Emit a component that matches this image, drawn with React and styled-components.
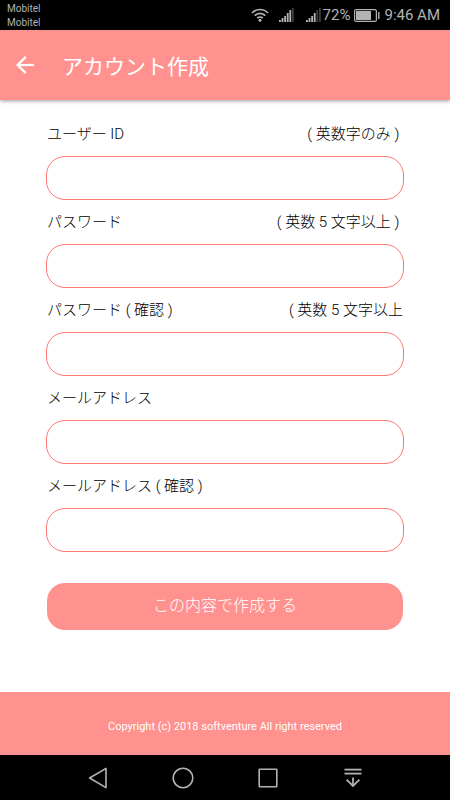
import React from "react";
import styled, { createGlobalStyle } from "styled-components";

const GlobalStyle = createGlobalStyle`
  * {
    box-sizing: border-box;
  }

  body {
    margin: 0;
    background-color: #ffffff;
    font-family: Roboto, "Noto Sans CJK JP", sans-serif;
  }
`;

const Screen = styled.div`
  display: flex;
  flex-direction: column;
  min-height: 100vh;
`;

const StatusBar = styled.div`
  display: flex;
  align-items: center;
  justify-content: space-between;
  height: 30px;
  padding: 0 10px 0 7px;
  background-color: #000000;
  color: #b3b3b3;
`;

const Carriers = styled.div`
  display: flex;
  flex-direction: column;
  padding-top: 2px;
  font-size: 10px;
  line-height: 14px;
`;

const StatusIcons = styled.div`
  display: flex;
  align-items: center;
  font-size: 15px;
  line-height: 30px;
`;

const StatusIcon = styled.svg`
  display: block;
  margin-right: ${(props) => props.$gap}px;
`;

const Percent = styled.span`
  margin-right: 4px;
`;

const Header = styled.header`
  display: flex;
  align-items: center;
  gap: 22px;
  height: 70px;
  padding: 0 10px;
  background-color: #ff918e;
  color: #ffffff;
  box-shadow: 0 1px 4px rgba(0, 0, 0, 0.4);
`;

const IconButton = styled.button`
  display: flex;
  align-items: center;
  justify-content: center;
  width: 30px;
  height: 40px;
  padding: 0;
  border: none;
  background: none;
  cursor: pointer;
`;

const Title = styled.h1`
  margin: 0;
  padding-top: 4px;
  font-size: 21px;
  font-weight: 400;
  line-height: 30px;
`;

const Form = styled.form`
  flex: 1;
  display: flex;
  flex-direction: column;
  gap: 10px;
  padding: 22px 46px 20px;
`;

const Field = styled.div`
  display: flex;
  flex-direction: column;
  gap: 10px;
`;

const FieldHead = styled.div`
  display: flex;
  justify-content: space-between;
  padding: 0 1px;
  color: #000000;
  font-size: 15px;
  font-weight: 300;
  line-height: 24px;
  white-space: pre;
`;

const Input = styled.input`
  width: 100%;
  height: 44px;
  padding: 0 18px;
  border: 1px solid #ff7673;
  border-radius: 19px;
  background-color: #ffffff;
  font: inherit;
  font-size: 15px;
  outline: none;
`;

const SubmitButton = styled.button`
  height: 47px;
  margin: 21px 1px 0;
  padding: 0 0 6px;
  border: none;
  border-radius: 18px;
  background-color: #ff918e;
  color: #ffffff;
  font-family: inherit;
  font-size: 16px;
  font-weight: 300;
  cursor: pointer;
`;

const Footer = styled.footer`
  display: flex;
  align-items: center;
  justify-content: center;
  height: 63px;
  padding-top: 6px;
  background-color: #ff918e;
  color: #ffffff;
  font-size: 11px;
  line-height: 16px;
`;

const NavBar = styled.nav`
  display: flex;
  align-items: center;
  justify-content: center;
  gap: 55px;
  height: 45px;
  background-color: #000000;
`;

const fields = [
  { id: "user-id", label: "ユーザー ID", hint: "( 英数字のみ ) ", type: "text" },
  {
    id: "password",
    label: "パスワード",
    hint: "( 英数 5 文字以上 ) ",
    type: "password",
  },
  {
    id: "password-confirm",
    label: "パスワード ( 確認 )",
    hint: "( 英数 5 文字以上",
    type: "password",
  },
  { id: "email", label: "メールアドレス", type: "email" },
  { id: "email-confirm", label: "メールアドレス ( 確認 )", type: "email" },
];

const Wifi = () => (
  <StatusIcon $gap={10} width="18" height="14" viewBox="0 0 18 14" fill="none">
    <g stroke="#b3b3b3" strokeWidth="1.7">
      <path d="M1 5C5.5 0.3 12.5 0.3 17 5" />
      <path d="M3.7 7.7C6.7 4.5 11.3 4.5 14.3 7.7" />
      <path d="M6.2 10.2C7.8 8.6 10.2 8.6 11.8 10.2" />
    </g>
    <circle cx="9" cy="12.2" r="1.5" fill="#b3b3b3" />
  </StatusIcon>
);

const Signal = ({ level, gap }) => (
  <StatusIcon $gap={gap} width="15" height="14" viewBox="0 0 15 14">
    {[2, 4, 6, 9, 12, 14].map((height, i) => (
      <rect
        key={height}
        x={i * 2.6}
        y={14 - height}
        width="1.8"
        height={height}
        fill={i < level ? "#b3b3b3" : "#3c3c3c"}
      />
    ))}
  </StatusIcon>
);

const Battery = () => (
  <StatusIcon $gap={4} width="26" height="13" viewBox="0 0 26 13" fill="none">
    <rect x="0.6" y="0.6" width="21.8" height="11.8" rx="1.5" stroke="#b3b3b3" strokeWidth="1.2" />
    <rect x="2" y="2" width="15" height="9" fill="#b3b3b3" />
    <path d="M24.8 3V10" stroke="#b3b3b3" strokeWidth="1.4" />
  </StatusIcon>
);

const App = () => {
  return (
    <Screen>
      <GlobalStyle />
      <StatusBar>
        <Carriers>
          <span>Mobitel</span>
          <span>Mobitel</span>
        </Carriers>
        <StatusIcons>
          <Wifi />
          <Signal level={5} gap={12} />
          <Signal level={4} gap={2} />
          <Percent>72%</Percent>
          <Battery />
          <span>9:46 AM</span>
        </StatusIcons>
      </StatusBar>
      <Header>
        <IconButton type="button" aria-label="戻る">
          <svg width="18" height="18" viewBox="0 0 18 18" fill="none" stroke="#ffffff" strokeWidth="2.2">
            <path d="M18 9H2" />
            <path d="M9.8 0.9L1.6 9L9.8 17.1" />
          </svg>
        </IconButton>
        <Title>アカウント作成</Title>
      </Header>
      <Form onSubmit={(e) => e.preventDefault()}>
        {fields.map((field) => (
          <Field key={field.id}>
            <FieldHead>
              <label htmlFor={field.id}>{field.label}</label>
              {field.hint && <span>{field.hint}</span>}
            </FieldHead>
            <Input id={field.id} name={field.id} type={field.type} />
          </Field>
        ))}
        <SubmitButton type="submit">この内容で作成する</SubmitButton>
      </Form>
      <Footer>Copyright (c) 2018 softventure All right reserved</Footer>
      <NavBar>
        <IconButton type="button" aria-label="戻る">
          <svg width="22" height="22" viewBox="0 0 22 22" fill="none" stroke="#b3b3b3" strokeWidth="1.6">
            <path d="M2.6 11L19 1.4V20.6Z" strokeLinejoin="round" />
          </svg>
        </IconButton>
        <IconButton type="button" aria-label="ホーム">
          <svg width="22" height="22" viewBox="0 0 22 22" fill="none" stroke="#b3b3b3" strokeWidth="1.6">
            <circle cx="11" cy="11" r="9.8" />
          </svg>
        </IconButton>
        <IconButton type="button" aria-label="履歴">
          <svg width="22" height="22" viewBox="0 0 22 22" fill="none" stroke="#b3b3b3" strokeWidth="1.6">
            <rect x="2.2" y="2.2" width="17.6" height="17.6" rx="0.5" />
          </svg>
        </IconButton>
        <IconButton type="button" aria-label="通知">
          <svg width="22" height="22" viewBox="0 0 22 22" fill="none" stroke="#b3b3b3" strokeWidth="1.8">
            <path d="M2.5 2.6H19.5" />
            <path d="M2.5 6.6H19.5" />
            <path d="M11 10.4V19" />
            <path d="M4.6 12.6L11 19L17.4 12.6" />
          </svg>
        </IconButton>
      </NavBar>
    </Screen>
  );
};

export default App;
